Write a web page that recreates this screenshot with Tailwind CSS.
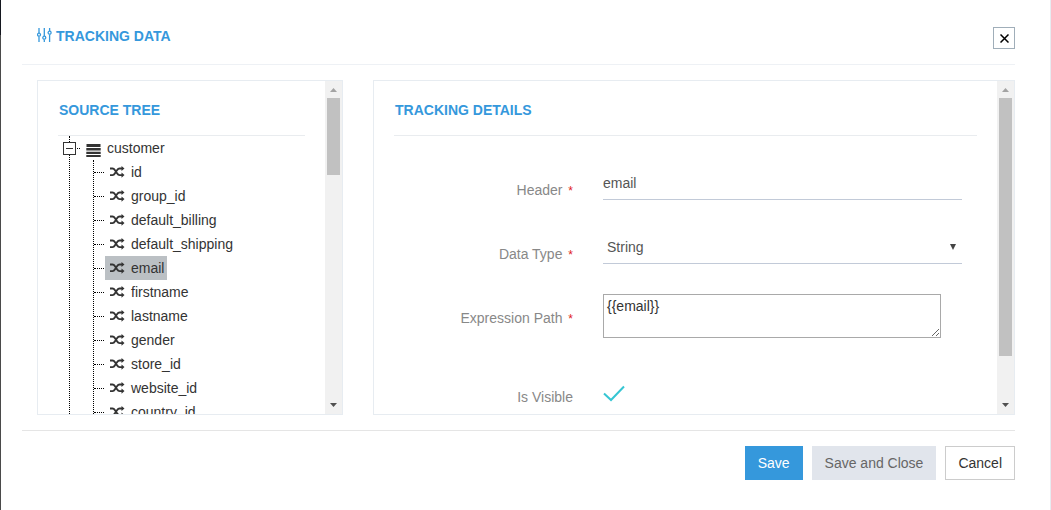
<!DOCTYPE html>
<html lang="en">
<head>
<meta charset="utf-8">
<title>Tracking Data</title>
<script src="https://cdn.jsdelivr.net/npm/@tailwindcss/browser@4"></script>
</head>
<body class="bg-white font-['Liberation_Sans',Arial,sans-serif] text-sm text-[#333]">
<svg class="hidden" aria-hidden="true">
  <symbol id="shuffle" viewBox="0 0 15 14">
    <path d="M0 3.500h2.500c1.300 0 1.800.7 2.500 1.800l2 3c.8 1.200 1.300 1.800 2.600 1.800H12M0 10.100h2.500c1.300 0 1.800-.6 2.500-1.800l2-3c.8-1.200 1.300-1.800 2.600-1.800H12" fill="none" stroke="currentColor" stroke-width="1.900"/>
    <path d="M11.500.9 14.500 3.500l-3 2.600zM11.500 7.500l3 2.600-3 2.600z" fill="currentColor"/>
  </symbol>
</svg>
<div class="flex min-h-screen">
  <div class="flex w-px flex-col">
    <div class="h-[35px] bg-[#14171f]"></div>
    <div class="grow bg-[#4a4a4a]"></div>
  </div>
  <main class="min-w-0 grow border-r border-[#e7ecf1] pr-[35px] pl-[21px]">
    <header class="flex items-start justify-between border-b border-[#eef1f5] pt-[26px] pb-[15px] pl-[15px]">
      <h1 class="flex items-center gap-1 font-bold text-[#3598dc]">
        <svg class="h-4 w-[15px]" viewBox="0 0 15 16" fill="none" stroke="currentColor" stroke-width="1.300" aria-hidden="true">
          <path d="M2 0v5M2 8.500V14M7.300 0v8M7.300 11.500V14M12.600 0v3M12.600 6.500V14"/>
          <circle cx="2" cy="6.700" r="1.500"/><circle cx="7.300" cy="9.700" r="1.500"/><circle cx="12.600" cy="4.700" r="1.500"/>
        </svg>
        TRACKING DATA
      </h1>
      <button type="button" aria-label="Close" class="mt-px flex size-[22px] items-center justify-center border border-[#a0aeb9] pt-px pl-px text-black">
        <svg class="size-[9px]" viewBox="0 0 9 9" fill="none" stroke="currentColor" stroke-width="1.500" aria-hidden="true"><path d="M.5.5l8 8M8.500.5l-8 8"/></svg>
      </button>
    </header>

    <div class="flex gap-[30px] border-b border-[#e5e5e5] py-[15px] pl-[15px]">
      <section class="flex h-[335px] w-[306px] shrink-0 border border-[#e7ecf1]">
        <div class="min-w-0 grow overflow-hidden px-5">
          <h2 class="border-b border-[#e9ecef] pt-[19px] pb-[15px] pl-px font-bold text-[#3598dc]">SOURCE TREE</h2>
          <div class="relative pl-[5px] leading-6">
            <div class="absolute top-0 left-[11px] h-72 border-l border-dotted border-black"></div>
            <div class="flex h-6 items-center">
              <button type="button" aria-label="Collapse customer" class="relative flex size-[13px] items-center justify-center border border-[#333] bg-white"><span class="h-px w-[7px] bg-[#333]"></span></button>
              <span class="ml-px w-[3px] border-t border-dotted border-black"></span>
              <svg class="mx-[6px] mt-[5px] h-[13px] w-[15px]" viewBox="0 0 15 13" fill="#333" aria-hidden="true"><path d="M.5 0h14v3H.5zM.3 4h14.400v2.500H.3zM.3 7.700h14.400v2.300H.3zM.3 11h14.400v2H.3z"/></svg>
              <span>customer</span>
            </div>
            <ul class="ml-[30px] border-l border-dotted border-black">
              <li class="flex items-center"><span class="w-[10px] border-t border-dotted border-black"></span><a href="#" class="ml-px flex h-6 items-center gap-[6px] pr-[3px] pl-[5px]"><svg class="h-[14px] w-[15px]"><use href="#shuffle"/></svg>id</a></li>
              <li class="flex items-center"><span class="w-[10px] border-t border-dotted border-black"></span><a href="#" class="ml-px flex h-6 items-center gap-[6px] pr-[3px] pl-[5px]"><svg class="h-[14px] w-[15px]"><use href="#shuffle"/></svg>group_id</a></li>
              <li class="flex items-center"><span class="w-[10px] border-t border-dotted border-black"></span><a href="#" class="ml-px flex h-6 items-center gap-[6px] pr-[3px] pl-[5px]"><svg class="h-[14px] w-[15px]"><use href="#shuffle"/></svg>default_billing</a></li>
              <li class="flex items-center"><span class="w-[10px] border-t border-dotted border-black"></span><a href="#" class="ml-px flex h-6 items-center gap-[6px] pr-[3px] pl-[5px]"><svg class="h-[14px] w-[15px]"><use href="#shuffle"/></svg>default_shipping</a></li>
              <li class="flex items-center"><span class="w-[10px] border-t border-dotted border-black"></span><a href="#" aria-current="true" class="ml-px flex h-6 items-center gap-[6px] bg-[#bbc0c4] pr-[3px] pl-[5px]"><svg class="h-[14px] w-[15px]"><use href="#shuffle"/></svg>email</a></li>
              <li class="flex items-center"><span class="w-[10px] border-t border-dotted border-black"></span><a href="#" class="ml-px flex h-6 items-center gap-[6px] pr-[3px] pl-[5px]"><svg class="h-[14px] w-[15px]"><use href="#shuffle"/></svg>firstname</a></li>
              <li class="flex items-center"><span class="w-[10px] border-t border-dotted border-black"></span><a href="#" class="ml-px flex h-6 items-center gap-[6px] pr-[3px] pl-[5px]"><svg class="h-[14px] w-[15px]"><use href="#shuffle"/></svg>lastname</a></li>
              <li class="flex items-center"><span class="w-[10px] border-t border-dotted border-black"></span><a href="#" class="ml-px flex h-6 items-center gap-[6px] pr-[3px] pl-[5px]"><svg class="h-[14px] w-[15px]"><use href="#shuffle"/></svg>gender</a></li>
              <li class="flex items-center"><span class="w-[10px] border-t border-dotted border-black"></span><a href="#" class="ml-px flex h-6 items-center gap-[6px] pr-[3px] pl-[5px]"><svg class="h-[14px] w-[15px]"><use href="#shuffle"/></svg>store_id</a></li>
              <li class="flex items-center"><span class="w-[10px] border-t border-dotted border-black"></span><a href="#" class="ml-px flex h-6 items-center gap-[6px] pr-[3px] pl-[5px]"><svg class="h-[14px] w-[15px]"><use href="#shuffle"/></svg>website_id</a></li>
              <li class="flex items-center"><span class="w-[10px] border-t border-dotted border-black"></span><a href="#" class="ml-px flex h-6 items-center gap-[6px] pr-[3px] pl-[5px]"><svg class="h-[14px] w-[15px]"><use href="#shuffle"/></svg>country_id</a></li>
            </ul>
          </div>
        </div>
        <div class="flex w-[17px] shrink-0 flex-col items-center justify-between bg-[#f1f1f1]" aria-hidden="true">
          <div class="flex flex-col items-center">
            <svg class="h-[17px] w-[17px]" viewBox="0 0 17 17" fill="#a3a3a3"><path d="M5 11l3.500-4L12 11z"/></svg>
            <div class="h-[77px] w-[13px] bg-[#c1c1c1]"></div>
          </div>
          <svg class="h-[17px] w-[17px]" viewBox="0 0 17 17" fill="#505050"><path d="M5 6h7l-3.500 4z"/></svg>
        </div>
      </section>

      <section class="flex h-[335px] min-w-0 grow border border-[#e7ecf1]">
        <div class="min-w-0 grow overflow-hidden px-5">
          <h2 class="border-b border-[#e9ecef] pt-[19px] pb-[15px] pl-px font-bold text-[#3598dc]">TRACKING DETAILS</h2>
          <form class="grid grid-cols-[179px_minmax(0,1fr)] gap-[30px] pt-[30px] pr-[15px] text-[#888]">
            <label for="header" class="pt-[14px] text-right leading-5">Header <span class="ml-[2px] text-xs leading-3 text-[#e02222]">*</span></label>
            <input id="header" type="text" value="email" class="h-[34px] w-full border-b border-[#c2cad8] text-[#555] outline-none">

            <label for="type" class="pt-[14px] text-right leading-5">Data Type <span class="ml-[2px] text-xs leading-3 text-[#e02222]">*</span></label>
            <div class="relative">
              <select id="type" class="block h-[34px] w-full appearance-none border-b border-[#c2cad8] bg-white pl-1 text-[#555] outline-none"><option>String</option></select>
              <svg class="pointer-events-none absolute top-[14px] right-[6px] h-[6px] w-[6px]" viewBox="0 0 6 6" fill="#444" aria-hidden="true"><path d="M0 0h6L3 6z"/></svg>
            </div>

            <label for="path" class="pt-[14px] text-right leading-5">Expression Path <span class="ml-[2px] text-xs leading-3 text-[#e02222]">*</span></label>
            <textarea id="path" class="mb-[5px] block h-[44px] w-[338px] border border-[#a9a9a9] px-[3px] py-[2px] leading-[18px] text-[#333] outline-none">{{email}}</textarea>

            <label for="visible" class="pt-[14px] text-right leading-5">Is Visible</label>
            <div class="pt-3">
              <input id="visible" type="checkbox" checked class="peer sr-only">
              <label for="visible" class="hidden w-[22px] peer-checked:block" aria-label="Is Visible">
                <svg class="h-[17px] w-[22px]" viewBox="0 0 22 17" fill="none" stroke="#36c6d3" stroke-width="2" aria-hidden="true"><path d="M1 8.500l7 6.500L21 1.500"/></svg>
              </label>
            </div>
          </form>
        </div>
        <div class="flex w-[17px] shrink-0 flex-col items-center justify-between bg-[#f1f1f1]" aria-hidden="true">
          <div class="flex flex-col items-center">
            <svg class="h-[17px] w-[17px]" viewBox="0 0 17 17" fill="#a3a3a3"><path d="M5 11l3.500-4L12 11z"/></svg>
            <div class="h-[258px] w-[13px] bg-[#c1c1c1]"></div>
          </div>
          <svg class="h-[17px] w-[17px]" viewBox="0 0 17 17" fill="#505050"><path d="M5 6h7l-3.500 4z"/></svg>
        </div>
      </section>
    </div>

    <footer class="flex justify-end gap-[9px] pt-[15px]">
      <button type="button" class="h-[34px] bg-[#3598dc] px-[13px] text-white">Save</button>
      <button type="button" class="h-[34px] bg-[#e1e5ec] px-[13px] text-[#666]">Save and Close</button>
      <button type="button" class="h-[34px] border border-[#ccc] bg-white px-3 text-[#333]">Cancel</button>
    </footer>
  </main>
</div>
</body>
</html>
